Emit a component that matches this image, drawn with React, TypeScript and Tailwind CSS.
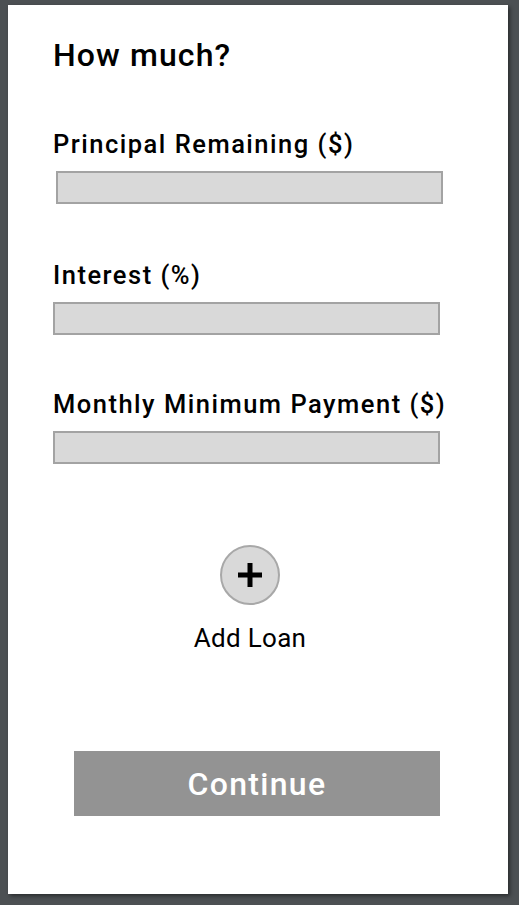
const fields = [
  { label: 'Principal Remaining ($)', offset: 'ml-[3px]', gap: 'mt-[61px]' },
  { label: 'Interest (%)', offset: '', gap: 'mt-[59px]' },
  { label: 'Monthly Minimum Payment ($)', offset: '', gap: 'mt-[57px]' },
]

function LoanField({ label, offset, gap }: { label: string; offset: string; gap: string }) {
  return (
    <div className={`flex flex-col ${gap}`}>
      <label className="text-[25.5px] font-medium leading-[25px] tracking-[1.5px] text-black">
        {label}
      </label>
      <input
        type="text"
        aria-label={label}
        className={`${offset} mt-[14px] h-[33px] w-[387px] border-2 border-[#a3a3a3] bg-[#d9d9d9] outline-none`}
      />
    </div>
  )
}

function App() {
  return (
    <div className="min-h-[905px] w-full bg-[#4c5053] pl-[8px] pt-[5px] font-['Roboto',sans-serif]">
      <div className="flex h-[889px] w-[500px] flex-col bg-white pl-[45px] pt-[34px] shadow-[2px_2px_4px_rgba(0,0,0,0.45)]">
        <h1 className="text-[32px] font-medium leading-[32px] tracking-[1.1px] text-black">How much?</h1>

        {fields.map((f) => (
          <LoanField key={f.label} label={f.label} offset={f.offset} gap={f.gap} />
        ))}

        <div className="mt-[81px] flex flex-col items-center pr-[61px]">
          <button
            type="button"
            aria-label="Add loan"
            className="flex h-[60px] w-[60px] items-center justify-center rounded-full border-2 border-[#a8a8a8] bg-[#d9d9d9]"
          >
            <svg width="26" height="26" viewBox="0 0 26 26">
              <path d="M13 1v24M1 13h24" stroke="black" strokeWidth="5" />
            </svg>
          </button>
          <span className="mt-[20px] text-[26px] leading-[26px] tracking-[0.3px] text-black">Add Loan</span>
        </div>

        <button
          type="button"
          className="ml-[21px] mt-[100px] h-[65px] w-[366px] bg-[#939393] text-[32px] font-medium tracking-[1.3px] text-white"
        >
          Continue
        </button>
      </div>
    </div>
  )
}

export default App
